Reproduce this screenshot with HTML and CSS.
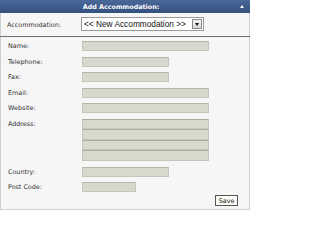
FILE: index.html
```html
<!DOCTYPE html>
<html>
<head>
<meta charset="utf-8">
<link rel="stylesheet" href="styles.css">
</head>
<body>
<div class="panel">
  <div class="header">
    <span class="title">Add Accommodation:</span>
    <span class="arrow"></span>
  </div>
  <div class="select-row">
    <span class="label">Accommodation:</span>
    <div class="select">
      <span class="select-text">&lt;&lt; New Accommodation &gt;&gt;</span>
      <span class="select-btn"><span class="caret"></span></span>
    </div>
  </div>
  <div class="form">
    <div class="row"><span class="label">Name:</span><span class="input w-long"></span></div>
    <div class="row"><span class="label">Telephone:</span><span class="input w-mid"></span></div>
    <div class="row"><span class="label">Fax:</span><span class="input w-mid"></span></div>
    <div class="row"><span class="label">Email:</span><span class="input w-long"></span></div>
    <div class="row"><span class="label">Website:</span><span class="input w-long"></span></div>
    <div class="row"><span class="label">Address:</span>
      <div class="address">
        <span class="input w-long line"></span>
        <span class="input w-long line"></span>
        <span class="input w-long line"></span>
        <span class="input w-long line"></span>
      </div>
    </div>
    <div class="row"><span class="label">Country:</span><span class="input w-mid"></span></div>
    <div class="row"><span class="label">Post Code:</span><span class="input w-short"></span></div>
  </div>
  <div class="actions"><span class="btn">Save</span></div>
</div>
</body>
</html>
```
FILE: styles.css
```css
html, body { margin: 0; padding: 0; background: #ffffff; }
body { width: 250px; height: 214px; font-family: "DejaVu Sans", Verdana, sans-serif; }
.panel {
  box-sizing: border-box;
  width: 250px;
  height: 210px;
  border: 1px solid #cfcfcf;
  border-top: none;
  background: #f6f6f6;
  display: flex;
  flex-direction: column;
}
.header {
  height: 13px;
  margin: 0 -1px;
  background: linear-gradient(#4a6898, #33507f);
  position: relative;
  display: flex;
  align-items: center;
  justify-content: center;
}
.title {
  color: #ffffff;
  font-weight: bold;
  font-size: 6.4px;
  margin-left: -8px;
  white-space: nowrap;
}
.arrow {
  position: absolute;
  right: 6px;
  top: 5px;
  width: 0; height: 0;
  border-left: 2.5px solid transparent;
  border-right: 2.5px solid transparent;
  border-bottom: 3px solid #ffffff;
}
.select-row {
  height: 19px;
  margin-top: 4px;
  border-bottom: 1px solid #707070;
  margin-left: -1px;
  margin-right: -1px;
  padding-left: 7px;
  display: flex;
  align-items: flex-start;
}
.select-row .label { margin-top: 4px; }
.label {
  width: 74px;
  flex: none;
  font-size: 6.4px;
  color: #333333;
  white-space: nowrap;
}
.select {
  box-sizing: border-box;
  width: 123px;
  flex: none;
  height: 14px;
  border: 1px solid #9a9a9a;
  background: #ffffff;
  display: flex;
  align-items: center;
  justify-content: space-between;
  overflow: hidden;
}
.select-text {
  font-family: "Liberation Sans", Arial, sans-serif;
  font-size: 8.3px;
  color: #111111;
  padding-left: 2px;
  white-space: nowrap;
}
.select-btn {
  box-sizing: border-box;
  flex: none;
  width: 10px;
  height: 10px;
  margin-right: 1px;
  border: 1px solid #888888;
  background: linear-gradient(#f4f4f4, #d8d8d8);
  display: flex;
  align-items: center;
  justify-content: center;
}
.caret {
  width: 0; height: 0;
  border-left: 2px solid transparent;
  border-right: 2px solid transparent;
  border-top: 3px solid #111111;
}
.form {
  padding: 4px 0 0 7px;
  display: flex;
  flex-direction: column;
  gap: 5.6px;
}
.row { display: flex; align-items: flex-start; }
.row .label { line-height: 10px; }
.input {
  box-sizing: border-box;
  display: block;
  flex: none;
  height: 10px;
  background: #d6dacd;
  border: 1px solid #c4c8bb;
  border-top-color: #b3b7aa;
}
.w-long { width: 127px; }
.w-mid { width: 87px; }
.w-short { width: 54px; }
.address { display: flex; flex-direction: column; }
.address .line { height: 10.5px; border-top-color: #a9ad9f; }
.actions {
  display: flex;
  justify-content: flex-end;
  padding: 3px 11px 0 0;
}
.btn {
  box-sizing: border-box;
  height: 11px;
  width: 23px;
  border: 1px solid #555555;
  background: #fbfbf6;
  font-size: 6.4px;
  font-family: "DejaVu Sans", Verdana, sans-serif;
  color: #222222;
  display: flex;
  align-items: center;
  justify-content: center;
}
```
